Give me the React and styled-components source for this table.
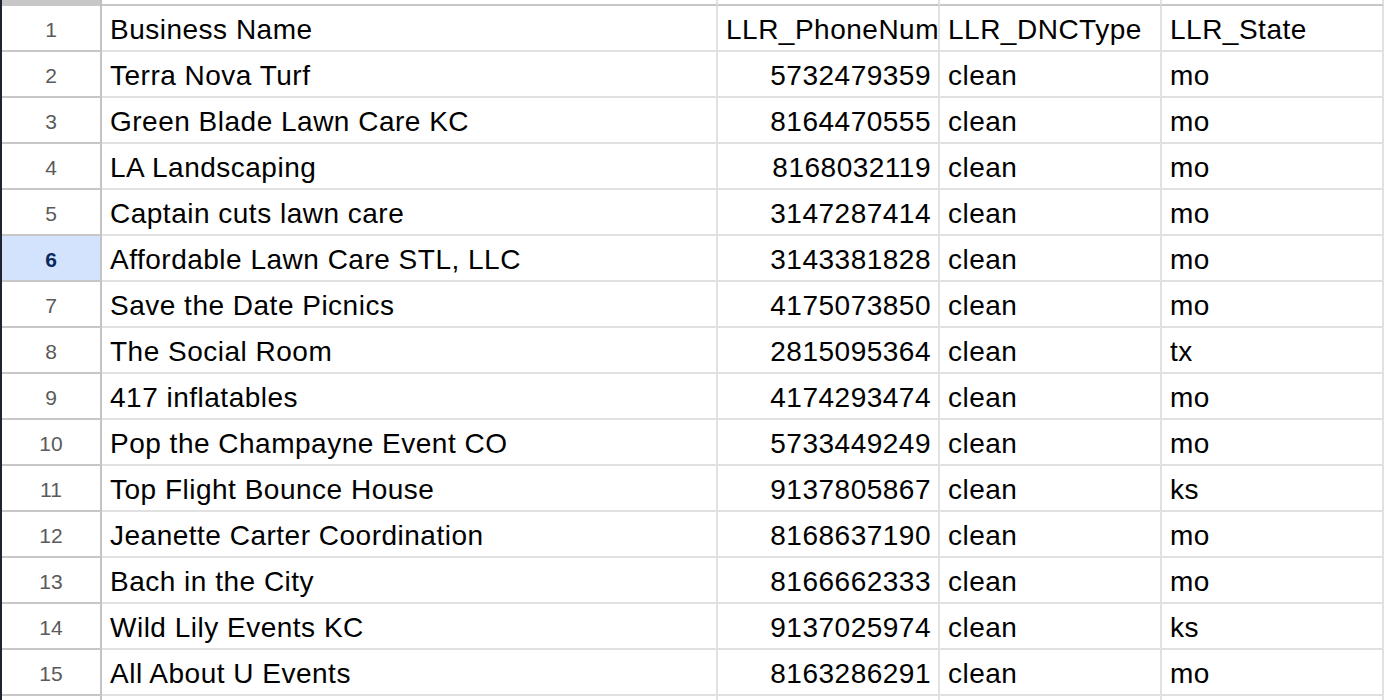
import styled, { createGlobalStyle } from "styled-components";

const GlobalStyle = createGlobalStyle`
    html, body {
        margin: 0;
        padding: 0;
        background: #ffffff;
        overflow: hidden;
    }
    * {
        box-sizing: border-box;
    }
`;

const rows = [
    ["Business Name", "LLR_PhoneNum", "LLR_DNCType", "LLR_State"],
    ["Terra Nova Turf", "5732479359", "clean", "mo"],
    ["Green Blade Lawn Care KC", "8164470555", "clean", "mo"],
    ["LA Landscaping", "8168032119", "clean", "mo"],
    ["Captain cuts lawn care", "3147287414", "clean", "mo"],
    ["Affordable Lawn Care STL, LLC", "3143381828", "clean", "mo"],
    ["Save the Date Picnics", "4175073850", "clean", "mo"],
    ["The Social Room", "2815095364", "clean", "tx"],
    ["417 inflatables", "4174293474", "clean", "mo"],
    ["Pop the Champayne Event CO", "5733449249", "clean", "mo"],
    ["Top Flight Bounce House", "9137805867", "clean", "ks"],
    ["Jeanette Carter Coordination", "8168637190", "clean", "mo"],
    ["Bach in the City", "8166662333", "clean", "mo"],
    ["Wild Lily Events KC", "9137025974", "clean", "ks"],
    ["All About U Events", "8163286291", "clean", "mo"],
];

export default function App() {
    const selectedRow = 6;

    return (
        <>
            <GlobalStyle />
            <Sheet>
                <Corner />
                <ColHead />
                <ColHead />
                <ColHead />
                <ColHead />

                {rows.map((row, i) => (
                    <Row key={i}>
                        <RowHead selected={i + 1 === selectedRow}>{i + 1}</RowHead>
                        <Cell>{row[0]}</Cell>
                        <Cell align="right">{row[1]}</Cell>
                        <Cell>{row[2]}</Cell>
                        <Cell>{row[3]}</Cell>
                    </Row>
                ))}

                {/* next row, only its top edge shows */}
                <RowHead />
                <Cell />
                <Cell />
                <Cell />
                <Cell />
            </Sheet>
        </>
    );
}

const Sheet = styled.div`
    display: grid;
    grid-template-columns: 100px 616px 222px 222px 222px;
    grid-auto-rows: 46px;
    grid-template-rows: 6px;
    width: 1384px;
    height: 700px;
    overflow: hidden;
    border-left: 2px solid #1e2430;
    font-family: "Liberation Sans", Arial, sans-serif;
`;

const Row = styled.div`
    display: contents;
`;

const Corner = styled.div`
    background: #c7c7c7;
    border-right: 2px solid #c0c0c0;
`;

const ColHead = styled.div`
    background: #ffffff;
    border-right: 2px solid #e1e1e1;
    border-bottom: 2px solid #c7c7c7;
`;

const RowHead = styled.div`
    display: flex;
    align-items: center;
    justify-content: center;
    padding-top: 3px;
    background: ${props => props.selected ? "#d3e3fd" : "#ffffff"};
    color: ${props => props.selected ? "#0b2a5b" : "#5a5a5a"};
    font-size: 21px;
    font-weight: ${props => props.selected ? 700 : 400};
    border-right: 2px solid #c4c4c4;
    border-bottom: 2px solid #c7c7c7;
`;

const Cell = styled.div`
    padding: 3px 7px 0 8px;
    line-height: 42px;
    font-size: 28px;
    letter-spacing: 0.5px;
    color: #000000;
    text-align: ${props => props.align || "left"};
    white-space: nowrap;
    overflow: hidden;
    border-right: 2px solid #e1e1e1;
    border-bottom: 2px solid #e1e1e1;
`;
